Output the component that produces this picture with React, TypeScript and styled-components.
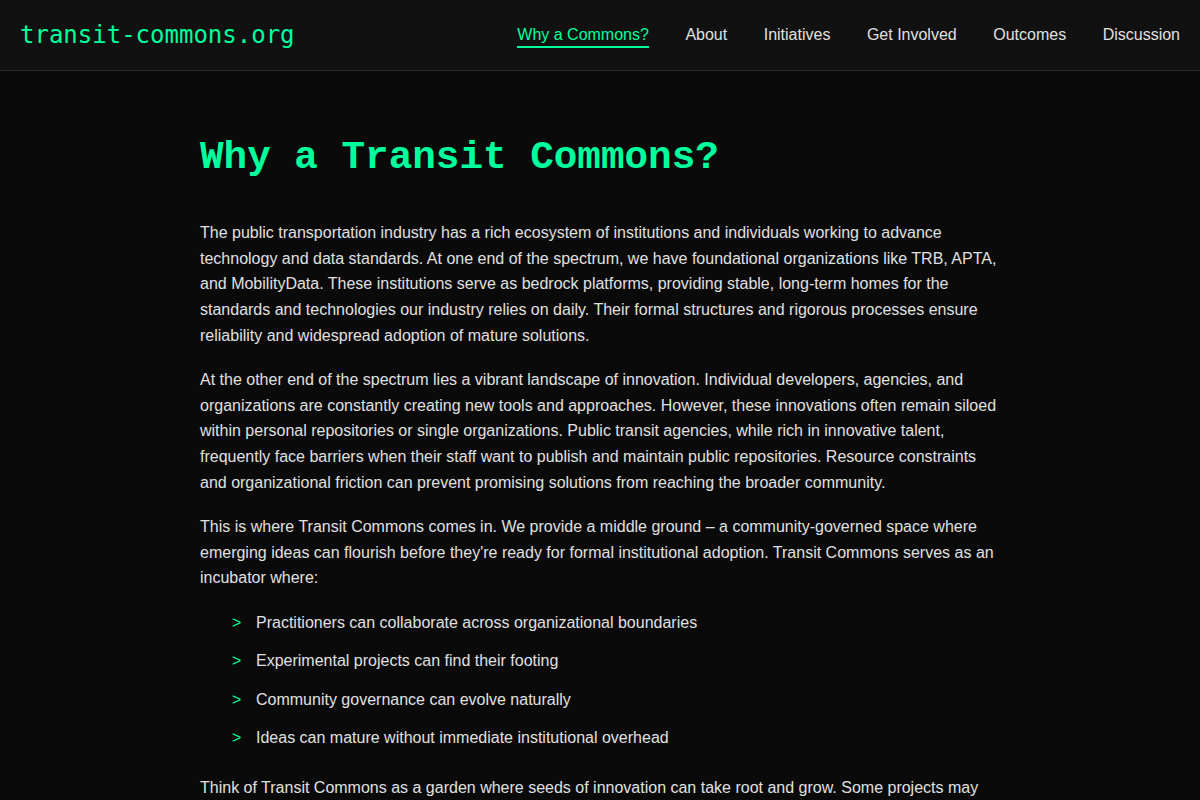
import React from "react";
import styled, { createGlobalStyle } from "styled-components";

const GREEN = "#00ff9d";

const Global = createGlobalStyle`
  html, body { margin: 0; padding: 0; background: #0a0a0a; }
  body {
    font-family: "Liberation Sans", Arial, sans-serif;
    color: #e0e0e0;
    font-size: 16px;
  }
  * { box-sizing: border-box; }
`;

const Header = styled.header`
  height: 71px;
  background: #111111;
  border-bottom: 1px solid #2a2a2a;
  display: flex;
  align-items: center;
  justify-content: space-between;
  padding: 0 20px;
`;

const Logo = styled.a`
  font-family: "DejaVu Sans Mono", monospace;
  font-size: 24px;
  color: ${GREEN};
  text-decoration: none;
`;

const Nav = styled.nav`
  display: flex;
  align-items: center;
  gap: 36.5px;
`;

const NavLink = styled.a<{ $active?: boolean }>`
  font-size: 16px;
  color: ${(p) => (p.$active ? GREEN : "#e0e0e0")};
  text-decoration: none;
  padding-bottom: 2px;
  border-bottom: 2px solid ${(p) => (p.$active ? GREEN : "transparent")};
  margin-top: 4px;
`;

const Main = styled.main`
  width: 800px;
  margin: 0 auto;
  padding: 63px 0 40px;
`;

const Title = styled.h1`
  font-family: "Liberation Mono", "Courier New", monospace;
  font-size: 39.3px;
  font-weight: 700;
  color: ${GREEN};
  margin: 0 0 39px;
  line-height: 1.2;
`;

const P = styled.p`
  font-size: 16px;
  line-height: 1.6;
  margin: 0 0 19px;
`;

const List = styled.ul`
  list-style: none;
  padding: 0 0 0 32px;
  margin: 0 0 24px;
`;

const Item = styled.li`
  position: relative;
  padding-left: 24px;
  line-height: 1.6;
  margin-bottom: 12.8px;
  &::before {
    content: ">";
    position: absolute;
    left: 0;
    top: 0;
    color: ${GREEN};
  }
`;

const navItems = [
  "Why a Commons?",
  "About",
  "Initiatives",
  "Get Involved",
  "Outcomes",
  "Discussion",
];

export default function App() {
  return (
    <>
      <Global />
      <Header>
        <Logo href="#">transit-commons.org</Logo>
        <Nav>
          {navItems.map((n, i) => (
            <NavLink key={n} href="#" $active={i === 0}>
              {n}
            </NavLink>
          ))}
        </Nav>
      </Header>
      <Main>
        <Title>Why a Transit Commons?</Title>
        <P>
          The public transportation industry has a rich ecosystem of institutions and individuals working to advance technology and data standards. At one end of the spectrum, we have foundational organizations like TRB, APTA, and MobilityData. These institutions serve as bedrock platforms, providing stable, long-term homes for the standards and technologies our industry relies on daily. Their formal structures and rigorous processes ensure reliability and widespread adoption of mature solutions.
        </P>
        <P>
          At the other end of the spectrum lies a vibrant landscape of innovation. Individual developers, agencies, and organizations are constantly creating new tools and approaches. However, these innovations often remain siloed within personal repositories or single organizations. Public transit agencies, while rich in innovative talent, frequently face barriers when their staff want to publish and maintain public repositories. Resource constraints and organizational friction can prevent promising solutions from reaching the broader community.
        </P>
        <P>
          This is where Transit Commons comes in. We provide a middle ground – a community-governed space where emerging ideas can flourish before they're ready for formal institutional adoption. Transit Commons serves as an incubator where:
        </P>
        <List>
          <Item>Practitioners can collaborate across organizational boundaries</Item>
          <Item>Experimental projects can find their footing</Item>
          <Item>Community governance can evolve naturally</Item>
          <Item>Ideas can mature without immediate institutional overhead</Item>
        </List>
        <P>
          Think of Transit Commons as a garden where seeds of innovation can take root and grow. Some projects may eventually graduate to established institutions, while others may remain community-maintained resources.
        </P>
      </Main>
    </>
  );
}
